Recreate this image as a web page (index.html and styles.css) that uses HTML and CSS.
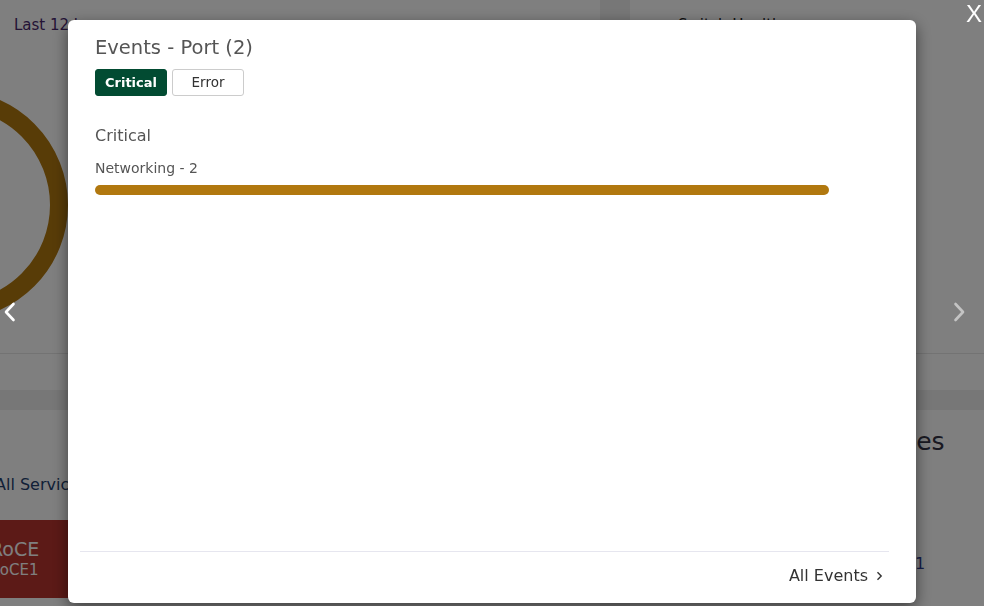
FILE: index.html
```html
<!DOCTYPE html>
<html lang="en">
<head>
<meta charset="utf-8">
<title>Events - Port</title>
<link rel="stylesheet" href="styles.css">
</head>
<body>
<div class="dashboard">
  <div class="row row-top">
    <section class="card card-chart">
      <div class="card-body">
        <div class="card-title">Last 12 hours</div>
        <div class="chart-area">
          <svg class="donut" width="230" height="230" viewBox="0 0 230 230">
            <circle cx="115" cy="115" r="106" fill="none" stroke="#b1780f" stroke-width="18"/>
          </svg>
        </div>
      </div>
      <div class="card-foot"></div>
    </section>
    <section class="card card-side">
      <div class="card-body">
        <div class="card-title side-title">Switch Health</div>
      </div>
      <div class="card-foot"></div>
    </section>
  </div>
  <div class="row row-bottom">
    <section class="card card-services">
      <a class="services-link">All Services</a>
      <div class="service-tile">
        <div class="tile-name">RoCE</div>
        <div class="tile-sub">RoCE1</div>
      </div>
    </section>
    <section class="card card-devices">
      <h2 class="devices-title">Managed Devices</h2>
      <div class="device-row"><span class="device-label">Switches</span><span class="device-count">1</span></div>
    </section>
  </div>
</div>

<div class="backdrop"></div>

<button class="carousel-btn carousel-prev" aria-label="Previous">
  <svg width="14" height="20" viewBox="0 0 14 20"><path d="M10.5 2 L3 10 L10.5 18" fill="none" stroke="#ffffff" stroke-width="2.6" stroke-linecap="round" stroke-linejoin="round"/></svg>
</button>
<button class="carousel-btn carousel-next" aria-label="Next">
  <svg width="14" height="20" viewBox="0 0 14 20"><path d="M3.5 2 L11 10 L3.5 18" fill="none" stroke="#c4c4c4" stroke-width="2.6" stroke-linecap="round" stroke-linejoin="round"/></svg>
</button>

<div class="modal" role="dialog">
  <div class="modal-header">
    <h1 class="modal-title">Events - Port (2)</h1>
    <div class="tabs">
      <button class="tab tab-active">Critical</button>
      <button class="tab">Error</button>
    </div>
  </div>
  <div class="modal-body">
    <h3 class="section-title">Critical</h3>
    <div class="bar-label">Networking - 2</div>
    <div class="bar-track"><div class="bar-fill" style="width:100%"></div></div>
  </div>
  <div class="modal-footer">
    <a class="all-events">All Events
      <svg class="chev" width="7" height="10" viewBox="0 0 7 10"><path d="M1.5 1.2 L5.2 5 L1.5 8.8" fill="none" stroke="#333" stroke-width="1.4"/></svg>
    </a>
  </div>
</div>

<button class="modal-close">X</button>
</body>
</html>
```

FILE: styles.css
```css
html, body {
  margin: 0;
  padding: 0;
}
body {
  width: 984px;
  height: 606px;
  overflow: hidden;
  background: #eeeeee;
  font-family: "DejaVu Sans", "Noto Sans", sans-serif;
  color: #333;
}

.dashboard {
  display: flex;
  flex-direction: column;
}
.row {
  display: flex;
  gap: 30px;
}
.row-bottom {
  margin-top: 20px;
}
.card {
  background: #ffffff;
  box-sizing: border-box;
}
.card-chart {
  width: 600px;
  height: 390px;
  display: flex;
  flex-direction: column;
}
.card-side {
  flex: 1;
  height: 390px;
  display: flex;
  flex-direction: column;
}
.card-body {
  flex: 1;
  padding: 15px 14px 0;
  overflow: hidden;
}
.card-side .card-body {
  padding-left: 48px;
}
.card-title {
  font-size: 15px;
  line-height: 20px;
  color: #48286c;
}
.side-title {
  color: #222;
}
.chart-area {
  margin-top: 55px;
  margin-left: -176px;
}
.donut {
  display: block;
}
.card-foot {
  height: 36px;
  border-top: 1px solid #e6e6e6;
}

.card-services {
  width: 620px;
  margin-left: -20px;
  height: 220px;
  padding: 0 15px;
}
.services-link {
  display: block;
  margin-top: 65px;
  font-size: 16px;
  line-height: 20px;
  color: #23406e;
}
.service-tile {
  margin: 25px -15px 0;
  height: 78px;
  box-sizing: border-box;
  padding: 18px 10px 0;
  background: #b8342e;
  color: #ffffff;
}
.tile-name {
  font-size: 19px;
  line-height: 22px;
}
.tile-sub {
  font-size: 15px;
  line-height: 20px;
}
.card-devices {
  flex: 1;
  height: 220px;
  padding: 17px 0 0 93px;
}
.devices-title {
  margin: 0;
  font-size: 25px;
  line-height: 30px;
  font-weight: normal;
  color: #333344;
}
.device-row {
  display: flex;
  margin-top: 97px;
  font-size: 16px;
  line-height: 20px;
}
.device-label {
  width: 192px;
  color: #333;
}
.device-count {
  color: #2a3a8f;
}

.backdrop {
  position: fixed;
  inset: 0;
  background: rgba(0, 0, 0, 0.5);
  z-index: 10;
}

.carousel-btn {
  position: fixed;
  top: 302px;
  z-index: 15;
  border: 0;
  padding: 0;
  background: transparent;
  width: 14px;
  height: 20px;
}
.carousel-btn svg {
  display: block;
}
.carousel-prev {
  left: 3px;
}
.carousel-next {
  left: 952px;
}

.modal {
  position: fixed;
  left: 68px;
  top: 20px;
  width: 848px;
  height: 583px;
  background: #ffffff;
  border-radius: 6px;
  box-shadow: 0 5px 15px rgba(0, 0, 0, 0.5);
  display: flex;
  flex-direction: column;
  z-index: 20;
}
.modal-header {
  padding: 16px 27px 0;
}
.modal-title {
  margin: 0;
  font-size: 19.5px;
  line-height: 24px;
  font-weight: normal;
  color: #555555;
}
.tabs {
  display: flex;
  gap: 5px;
  margin-top: 9px;
}
.tab {
  width: 72px;
  height: 27px;
  box-sizing: border-box;
  padding: 0;
  border: 1px solid #cccccc;
  border-radius: 3px;
  background: #ffffff;
  color: #333333;
  font-family: "DejaVu Sans", sans-serif;
  font-size: 13.5px;
  line-height: 25px;
  text-align: center;
}
.tab-active {
  background: #024b32;
  border-color: #024b32;
  color: #ffffff;
  font-weight: bold;
  font-size: 13px;
}
.modal-body {
  flex: 1;
  padding: 29.5px 27px 0;
}
.section-title {
  margin: 0;
  font-size: 16px;
  line-height: 20px;
  font-weight: normal;
  color: #555555;
}
.bar-label {
  margin-top: 13px;
  font-size: 14px;
  line-height: 18px;
  color: #555555;
}
.bar-track {
  margin-top: 8.5px;
  margin-right: 60px;
  height: 10px;
  border-radius: 5px;
}
.bar-fill {
  height: 100%;
  background: #b1780f;
  border-radius: 5px;
}
.modal-footer {
  margin: 0 27px 0 12px;
  border-top: 1px solid #e6e6ef;
  padding: 14px 6px 17px 0;
  display: flex;
  justify-content: flex-end;
}
.all-events {
  display: flex;
  align-items: center;
  gap: 8px;
  font-size: 16px;
  line-height: 20px;
  color: #333333;
}
.chev {
  display: block;
}

.modal-close {
  position: fixed;
  top: 2px;
  right: 2px;
  z-index: 25;
  border: 0;
  padding: 0;
  background: transparent;
  color: #ffffff;
  font-family: "Liberation Sans", sans-serif;
  font-size: 24px;
  line-height: 24px;
}
```
